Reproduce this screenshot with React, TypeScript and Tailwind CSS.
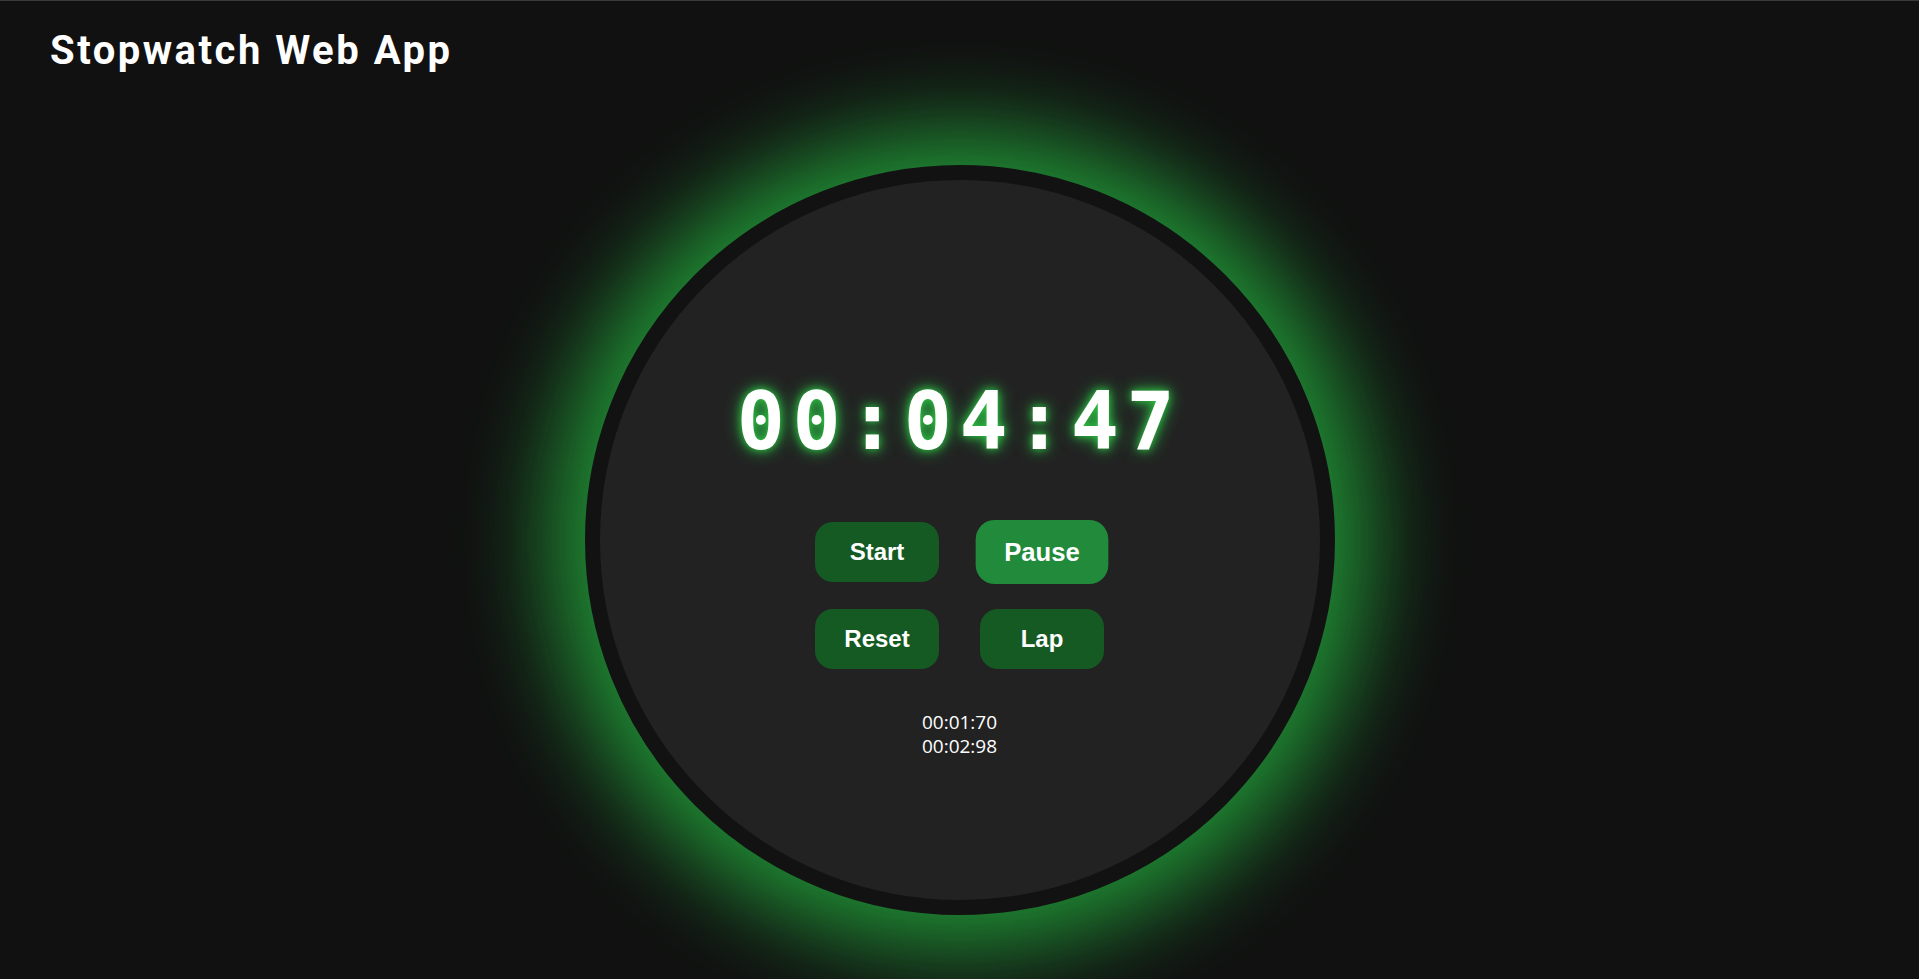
export default function App() {
  const laps = ["00:01:70", "00:02:98"];
  return (
    <main className="flex h-[979px] flex-col overflow-hidden border-t border-[#3a3a3a] bg-[#111111] text-white">
      <header className="h-[100px] shrink-0 px-[50px] py-[20px]">
        <h1 className="text-[40px] leading-[60px] font-bold tracking-[2.5px] text-white" style={{ fontFamily: "Roboto, sans-serif" }}>
          Stopwatch Web App
        </h1>
      </header>

      <section className="flex flex-1 items-center justify-center">
        <div className="flex h-[750px] w-[750px] flex-col items-center rounded-full border-[15px] border-[#121212] bg-[#222222] pt-[202px] shadow-[0_0_90px_35px_rgba(34,160,58,0.9)]">
          <div
            className="text-[80px] leading-[80px] font-bold tracking-[7.5px] text-white [text-shadow:0_0_8px_#2ecc40,0_0_18px_#28a745]"
            style={{ fontFamily: '"DejaVu Sans Mono", monospace' }}
          >
            00:04:47
          </div>

          <div className="mt-[60px] grid grid-cols-[124px_124px] gap-x-[41px] gap-y-[27px]" style={{ fontFamily: '"Liberation Sans", Arial, sans-serif' }}>
            <button className="h-[60px] rounded-[18px] bg-[#145a22] text-[24px] font-bold text-white">Start</button>
            <button className="h-[60px] scale-[1.07] rounded-[18px] bg-[#218b3b] text-[24px] font-bold text-white">Pause</button>
            <button className="h-[60px] rounded-[18px] bg-[#145a22] text-[24px] font-bold text-white">Reset</button>
            <button className="h-[60px] rounded-[18px] bg-[#145a22] text-[24px] font-bold text-white">Lap</button>
          </div>

          <ul className="mt-[41px] text-center text-[19px] leading-[24px] text-white" style={{ fontFamily: '"Open Sans", sans-serif' }}>
            {laps.map((l) => (
              <li key={l}>{l}</li>
            ))}
          </ul>
        </div>
      </section>
    </main>
  );
}
